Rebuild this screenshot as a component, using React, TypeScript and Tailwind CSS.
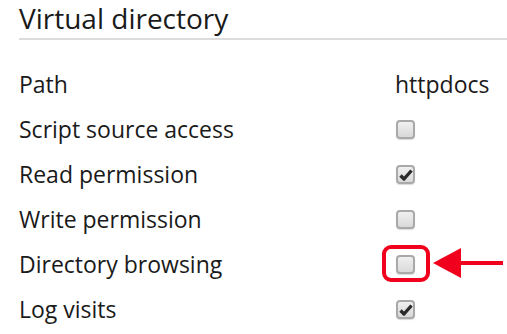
import React from "react";

type Row = { label: string; value?: string; checked?: boolean; marked?: boolean };

const rows: Row[] = [
  { label: "Path", value: "httpdocs" },
  { label: "Script source access", checked: false },
  { label: "Read permission", checked: true },
  { label: "Write permission", checked: false },
  { label: "Directory browsing", checked: false, marked: true },
  { label: "Log visits", checked: true },
];

function Checkbox({ checked }: { checked?: boolean }) {
  return (
    <span className="flex h-[19px] w-[19px] items-center justify-center rounded-[4px] border-2 border-[#a9a9a9] bg-gradient-to-b from-[#f0f0f0] to-[#d9d9d9] shadow-[0_1px_1px_rgba(0,0,0,0.15)]">
      {checked && (
        <svg width="14" height="12" viewBox="0 0 14 12">
          <path d="M1.5 6.5 L5 10 L12.5 1.5" fill="none" stroke="#2b2b2b" strokeWidth="3.4" strokeLinejoin="round" />
        </svg>
      )}
    </span>
  );
}

export default function App() {
  return (
    <div className="w-[507px] h-[334px] overflow-hidden bg-white pl-[19px] text-[#1a1a1a]" style={{ fontFamily: "'Open Sans', sans-serif" }}>
      <div className="pb-[2px] text-[28px] leading-[36px] border-b-2 border-[#dcdcdc]">
        Virtual directory
      </div>

      <div className="mt-[22px]">
        {rows.map((row) => (
          <div key={row.label} className="flex h-[45px] items-center text-[23px] leading-[45px]">
            <div className="w-[376px]">{row.label}</div>
            <div className="relative flex items-center">
              {row.value ? (
                <span>{row.value}</span>
              ) : (
                <span className="ml-[1px]">
                  <Checkbox checked={row.checked} />
                </span>
              )}
              {row.marked && (
                <>
                  <span className="absolute left-[-13px] top-[-10px] h-[37px] w-[48px] rounded-[9px] border-4 border-[#f0001c]" />
                  <svg className="absolute left-[38px] top-[-8px]" width="72" height="32" viewBox="0 0 72 32">
                    <polygon points="0,16 28,1 28,31" fill="#f0001c" />
                    <rect x="26" y="14" width="44" height="4" fill="#f0001c" />
                  </svg>
                </>
              )}
            </div>
          </div>
        ))}
      </div>
    </div>
  );
}
